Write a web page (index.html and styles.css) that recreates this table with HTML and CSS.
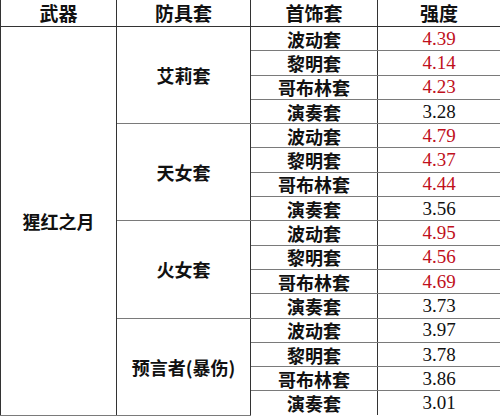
FILE: index.html
```html
<!DOCTYPE html>
<html lang="zh">
<head>
<meta charset="utf-8">
<link rel="stylesheet" href="styles.css">
</head>
<body>
<table class="tbl">
  <colgroup>
    <col class="c1"><col class="c2"><col class="c3"><col class="c4">
  </colgroup>
  <thead>
    <tr class="head"><th>武器</th><th>防具套</th><th>首饰套</th><th>强度</th></tr>
  </thead>
  <tbody>
    <tr><td class="weapon" rowspan="16">猩红之月</td><td class="armor" rowspan="4">艾莉套</td><td class="acc">波动套</td><td class="num hi">4.39</td></tr>
    <tr><td class="acc">黎明套</td><td class="num hi">4.14</td></tr>
    <tr><td class="acc">哥布林套</td><td class="num hi">4.23</td></tr>
    <tr><td class="acc">演奏套</td><td class="num">3.28</td></tr>
    <tr><td class="armor" rowspan="4">天女套</td><td class="acc">波动套</td><td class="num hi">4.79</td></tr>
    <tr><td class="acc">黎明套</td><td class="num hi">4.37</td></tr>
    <tr><td class="acc">哥布林套</td><td class="num hi">4.44</td></tr>
    <tr><td class="acc">演奏套</td><td class="num">3.56</td></tr>
    <tr><td class="armor" rowspan="4">火女套</td><td class="acc">波动套</td><td class="num hi">4.95</td></tr>
    <tr><td class="acc">黎明套</td><td class="num hi">4.56</td></tr>
    <tr><td class="acc">哥布林套</td><td class="num hi">4.69</td></tr>
    <tr><td class="acc">演奏套</td><td class="num">3.73</td></tr>
    <tr><td class="armor" rowspan="4">预言者(暴伤)</td><td class="acc">波动套</td><td class="num">3.97</td></tr>
    <tr><td class="acc">黎明套</td><td class="num">3.78</td></tr>
    <tr><td class="acc">哥布林套</td><td class="num">3.86</td></tr>
    <tr><td class="acc">演奏套</td><td class="num">3.01</td></tr>
  </tbody>
</table>
</body>
</html>
```

FILE: styles.css
```css
html, body {
  margin: 0;
  padding: 0;
  background: #ffffff;
}
.tbl {
  width: 500px;
  table-layout: fixed;
  border-collapse: collapse;
  font-family: "Noto Sans CJK SC", "Noto Sans", sans-serif;
  color: #111111;
}
.c1 { width: 116px; }
.c2 { width: 134px; }
.c3 { width: 127px; }
.c4 { width: 123px; }
.tbl th, .tbl td {
  padding: 0;
  text-align: center;
  vertical-align: middle;
  border-left: 1px solid #333333;
  border-right: 1px solid #333333;
  border-top: 1px solid #7a7a7a;
  border-bottom: 1px solid #7a7a7a;
  font-size: 18px;
  line-height: 20px;
  font-weight: 700;
}
.head th {
  height: 26px;
  border-top: none;
  border-bottom: 1px solid #333333;
  font-size: 19px;
}
.tbl tbody tr {
  height: 24.3px;
}
.tbl tbody tr:last-child td {
  border-bottom: none;
}
.weapon {
  font-size: 18px;
}
.armor {
  font-size: 18px;
}
.acc {
  font-size: 18px;
}
.tbl td.num {
  font-family: "Liberation Serif", "DejaVu Serif", serif;
  font-weight: 400;
  font-size: 19px;
  color: #111111;
}
.tbl td.num.hi {
  color: #c0101c;
}
```
